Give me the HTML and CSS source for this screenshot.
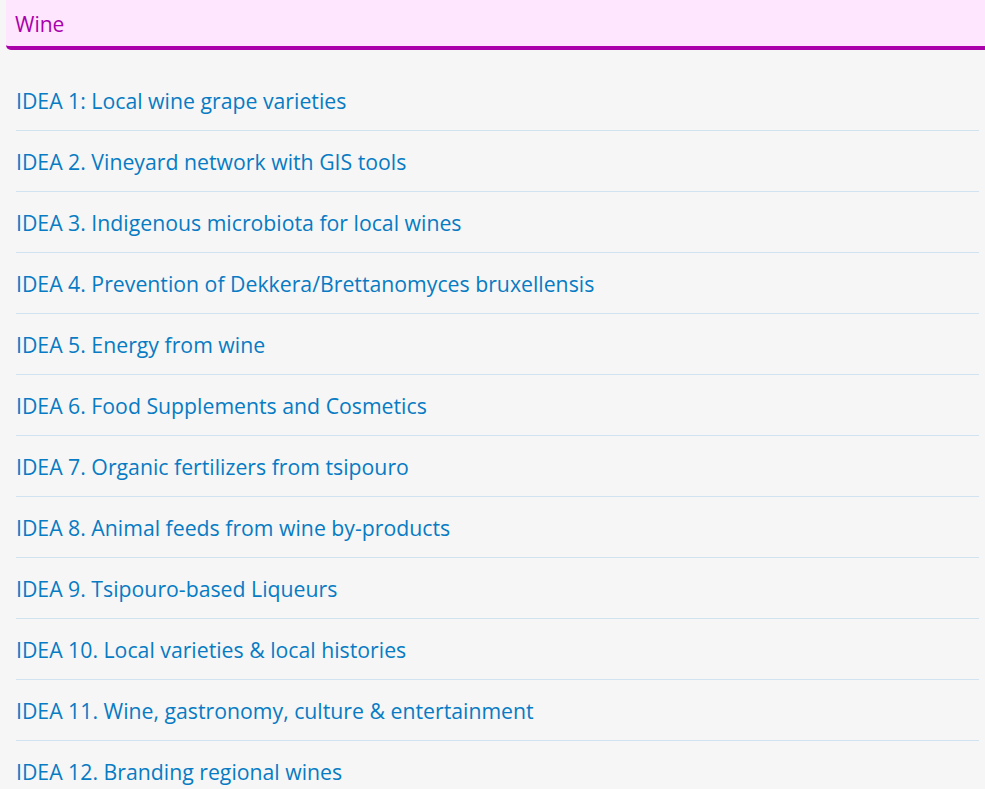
FILE: index.html
```html
<!DOCTYPE html>
<html lang="en">
<head>
  <meta charset="UTF-8" />
  <meta name="viewport" content="width=device-width, initial-scale=1.0" />
  <title>Wine</title>
  <link rel="stylesheet" href="styles.css">
</head>
<body>
  <div class="cat-header">Wine</div>

  <ul class="idea-list">
    <li><a href="#">IDEA 1: Local wine grape varieties</a></li>
    <li><a href="#">IDEA 2. Vineyard network with GIS tools</a></li>
    <li><a href="#">IDEA 3. Indigenous microbiota for local wines</a></li>
    <li><a href="#">IDEA 4. Prevention of Dekkera/Brettanomyces bruxellensis</a></li>
    <li><a href="#">IDEA 5. Energy from wine</a></li>
    <li><a href="#">IDEA 6. Food Supplements and Cosmetics</a></li>
    <li><a href="#">IDEA 7. Organic fertilizers from tsipouro</a></li>
    <li><a href="#">IDEA 8. Animal feeds from wine by-products</a></li>
    <li><a href="#">IDEA 9. Tsipouro-based Liqueurs</a></li>
    <li><a href="#">IDEA 10. Local varieties &amp; local histories</a></li>
    <li><a href="#">IDEA 11. Wine, gastronomy, culture &amp; entertainment</a></li>
    <li><a href="#">IDEA 12. Branding regional wines</a></li>
  </ul>
</body>
</html>
```

FILE: styles.css
```css
body {
  margin: 0;
  background: #f6f6f6;
  font-family: 'Open Sans', sans-serif;
}
.cat-header {
  margin-left: 6px;
  height: 46px;
  line-height: 49px;
  padding-left: 9px;
  background: #ffe6ff;
  color: #aa00aa;
  font-size: 21px;
  border-bottom: 4px solid #aa00aa;
  border-bottom-left-radius: 5px;
}
.idea-list {
  list-style: none;
  margin: 20px 6px 0 16px;
  padding: 0;
}
.idea-list li {
  height: 60px;
  border-bottom: 1px solid #cfe3f1;
}
.idea-list li:last-child {
  border-bottom: none;
}
.idea-list a {
  display: block;
  line-height: 62px;
  color: #077bc3;
  font-size: 21.25px;
  text-decoration: none;
}
```
